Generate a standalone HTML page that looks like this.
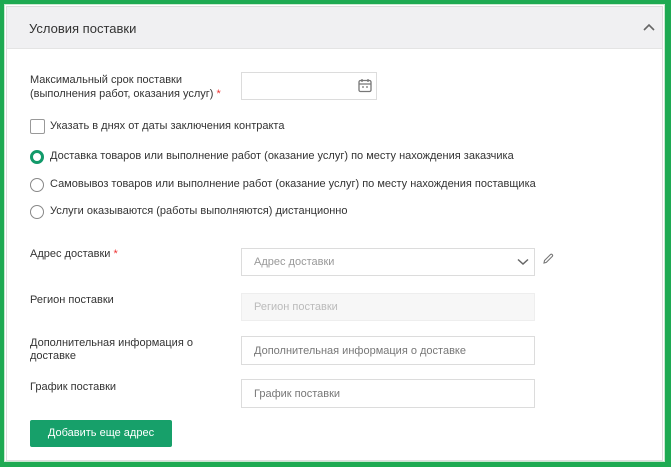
<!DOCTYPE html>
<html><head><meta charset="utf-8"><style>
*{box-sizing:border-box;margin:0;padding:0}
body{width:671px;height:467px;background:#1eaa52;position:relative;overflow:hidden;font-family:"Liberation Sans",sans-serif;font-size:11px;color:#333}
.frame{position:absolute;left:4px;top:4px;right:6px;bottom:5px;border:1px solid #c8e8d0;background:#fff}
.panel{position:absolute;left:6px;top:6px;right:8px;bottom:6px;background:#fff;border:1px solid #ddd}
.hdr{position:absolute;left:0;top:0;right:0;height:42px;background:#f0f0f2;border-bottom:1px solid #e4e4e4}
.hdr span{position:absolute;left:22px;top:14px;font-size:13px;color:#333}
.abs{position:absolute}
.inp{position:absolute;border:1px solid #dcdcdc;background:#fff;height:31px;color:#999;font-size:11px;padding:9px 12px}
.red{color:#e33}
.radio{position:absolute;width:14px;height:14px;border:1px solid #888;border-radius:50%;background:#fff}
.radio.on{border:3.5px solid #129a6a}
.lbl{position:absolute;color:#333}
</style></head><body>
<div class="frame"></div>
<div class="panel">
<div class="hdr"><span>Условия поставки</span>
<svg class="abs" style="left:636px;top:16px" width="12" height="8" viewBox="0 0 12 8"><path d="M1 7 L6 2 L11 7" stroke="#666" stroke-width="1.6" fill="none"/></svg></div>
<div class="lbl" style="left:23px;top:66px;line-height:14px">Максимальный срок поставки<br>(выполнения работ, оказания услуг) <span class="red">*</span></div>
<div class="inp" style="left:234px;top:65px;width:136px;height:28px"></div>
<svg class="abs" style="left:351px;top:71px" width="14" height="15" viewBox="0 0 14 15"><rect x="1" y="2.5" width="12" height="11" rx="1.5" stroke="#777" stroke-width="1.3" fill="none"/><path d="M1 6h12M4 1v3M10 1v3M4 9h2M8 9h2" stroke="#777" stroke-width="1.3"/></svg>
<div class="abs" style="left:23px;top:112px;width:15px;height:15px;border:1px solid #999;border-radius:2px"></div>
<div class="lbl" style="left:43px;top:113px">Указать в днях от даты заключения контракта</div>
<div class="radio on" style="left:23px;top:143px"></div>
<div class="lbl" style="left:43px;top:143px">Доставка товаров или выполнение работ (оказание услуг) по месту нахождения заказчика</div>
<div class="radio" style="left:23px;top:171px"></div>
<div class="lbl" style="left:43px;top:171px">Самовывоз товаров или выполнение работ (оказание услуг) по месту нахождения поставщика</div>
<div class="radio" style="left:23px;top:198px"></div>
<div class="lbl" style="left:43px;top:198px">Услуги оказываются (работы выполняются) дистанционно</div>
<div class="lbl" style="left:23px;top:241px">Адрес доставки <span class="red">*</span></div>
<div class="inp" style="left:234px;top:241px;width:294px;height:28px;padding-top:7px">Адрес доставки</div>
<svg class="abs" style="left:510px;top:251px" width="12" height="8" viewBox="0 0 12 8"><path d="M1 1.5 L6 6 L11 1.5" stroke="#666" stroke-width="1.5" fill="none"/></svg>
<svg class="abs" style="left:535px;top:246px" width="12" height="12" viewBox="0 0 12 12"><path d="M2 10 L2.5 7.5 L8.5 1.5 Q9.5 0.8 10.3 1.7 Q11 2.5 10.3 3.4 L4.3 9.4 Z" stroke="#777" stroke-width="1.1" fill="none"/></svg>
<div class="lbl" style="left:23px;top:287px">Регион поставки</div>
<div class="inp" style="left:234px;top:286px;width:294px;height:28px;padding-top:7px;background:#f7f7f7;border-color:#eee;color:#bbb">Регион поставки</div>
<div class="lbl" style="left:23px;top:330px;line-height:13px">Дополнительная информация о<br>доставке</div>
<div class="inp" style="left:234px;top:329px;width:294px;height:29px;padding-top:8px;color:#777">Дополнительная информация о доставке</div>
<div class="lbl" style="left:23px;top:374px">График поставки</div>
<div class="inp" style="left:234px;top:372px;width:294px;height:29px;padding-top:8px;color:#777">График поставки</div>
<div class="abs" style="left:23px;top:413px;width:142px;height:27px;background:#17a06a;border-radius:2px;color:#fff;text-align:center;line-height:27px">Добавить еще адрес</div>
</div>
</body></html>
